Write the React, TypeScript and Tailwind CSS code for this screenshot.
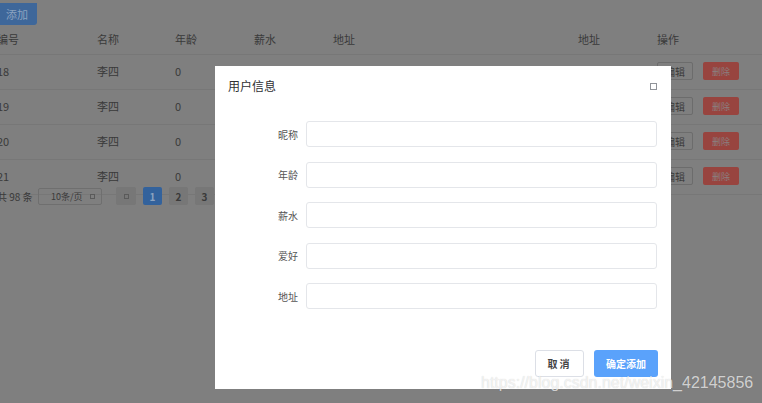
import React from "react";

const rows = ["18", "19", "20", "21"];
const fields = ["昵称", "年龄", "薪水", "爱好", "地址"];

const font = { fontFamily: '"Noto Sans CJK SC", "Noto Sans", sans-serif' };

const Row = ({ id }: { id: string }) => (
  <div className="flex items-center h-[35px] pb-[2px] border-b border-[#777777] text-[11px] text-[#3a3a3a]">
    <div className="w-[100px]">{id}</div>
    <div className="w-[78px]">李四</div>
    <div className="w-[79px]">0</div>
    <div className="w-[79px]"></div>
    <div className="w-[245px]"></div>
    <div className="w-[79px]"></div>
    <div className="flex items-center gap-[10px]">
      <button className="w-[36px] h-[18px] border border-[#6c6c6c] rounded-[2px] text-[10px] text-[#3a3a3a]">编辑</button>
      <button className="w-[36px] h-[18px] rounded-[2px] bg-[#98443f] text-[9px] text-[#8a8080]">删除</button>
    </div>
  </div>
);

export default function App() {
  return (
    <div style={font} className="relative w-[762px] h-[403px] overflow-hidden bg-[#7f7f7f]">
      {/* PAGE (dimmed) */}
      <div className="ml-[-3px]">
        <button className="ml-[-2px] w-[42px] h-[22px] bg-[#3e679a] rounded-br-[3px] text-[11px] text-[#8ca3c0] pl-[2px]">添加</button>
        <div className="flex items-center h-[30px] pb-[2px] border-b border-[#777777] text-[11px] text-[#3a3a3a]">
          <div className="w-[100px]">编号</div>
          <div className="w-[78px]">名称</div>
          <div className="w-[79px]">年龄</div>
          <div className="w-[79px]">薪水</div>
          <div className="w-[245px]">地址</div>
          <div className="w-[79px]">地址</div>
          <div>操作</div>
        </div>
        {rows.map((r) => (
          <Row key={r} id={r} />
        ))}
        <div className="flex items-center h-[20px] mt-[-9px] text-[10px] text-[#3a3a3a]">
          <span className="w-[41px] whitespace-nowrap">共 98 条</span>
          <div className="w-[64px] h-[17px] border border-[#6f6f6f] rounded-[2px] flex items-center justify-between pl-[12px] pr-[6px] text-[9px] whitespace-nowrap">
            <span>10条/页</span>
            <span className="w-[5px] h-[5px] border border-[#5a5a5a]"></span>
          </div>
          <div className="ml-[14px] w-[20px] h-[18px] bg-[#777777] rounded-[2px] flex items-center justify-center">
            <span className="w-[5px] h-[5px] border border-[#5a5a5a]"></span>
          </div>
          <div className="ml-[7px] w-[19px] h-[18px] bg-[#33629c] rounded-[2px] flex items-center justify-center text-[#8ca3c0] font-bold text-[10px]">1</div>
          <div className="ml-[7px] w-[19px] h-[18px] bg-[#777777] rounded-[2px] flex items-center justify-center font-bold text-[10px]">2</div>
          <div className="ml-[7px] w-[19px] h-[18px] bg-[#777777] rounded-[2px] flex items-center justify-center font-bold text-[10px]">3</div>
        </div>
      </div>

      {/* MODAL */}
      <div className="absolute left-[215px] top-[66px] w-[456px] h-[323px] bg-white flex flex-col">
        <div className="flex items-center justify-between h-[40px] pl-[13px] pr-[14px]">
          <span className="text-[12px] text-[#303133]">用户信息</span>
          <span className="w-[7px] h-[7px] border-[1.5px] border-[#909399]"></span>
        </div>
        <div className="flex flex-col gap-[14.5px] mt-[15px] pr-[14px]">
          {fields.map((f) => (
            <div key={f} className="flex items-center">
              <label className="w-[83px] text-right text-[10px] text-[#555555]">{f}</label>
              <div className="ml-[8px] flex-1 h-[26px] border border-[#e4e6ea] rounded-[3px]"></div>
            </div>
          ))}
        </div>
        <div className="mt-auto mb-[12px] flex justify-end gap-[10px] pr-[13px]">
          <button className="w-[49px] h-[27px] border border-[#dcdfe6] rounded-[3px] text-[10px] font-bold text-[#444444] tracking-[2px]">取消</button>
          <button className="w-[64px] h-[27px] rounded-[3px] bg-[#5aa2fb] text-[10px] font-bold text-white">确定添加</button>
        </div>
      </div>

      {/* WATERMARK */}
      <div
        className="absolute left-[481px] top-[373px] text-[16px] leading-[20px] text-white/70"
        style={{ fontFamily: '"Liberation Sans", Arial, sans-serif', textShadow: "0 0 1px rgba(0,0,0,0.2)" }}
      >
        https://blog.csdn.net/weixin_42145856
      </div>
    </div>
  );
}
